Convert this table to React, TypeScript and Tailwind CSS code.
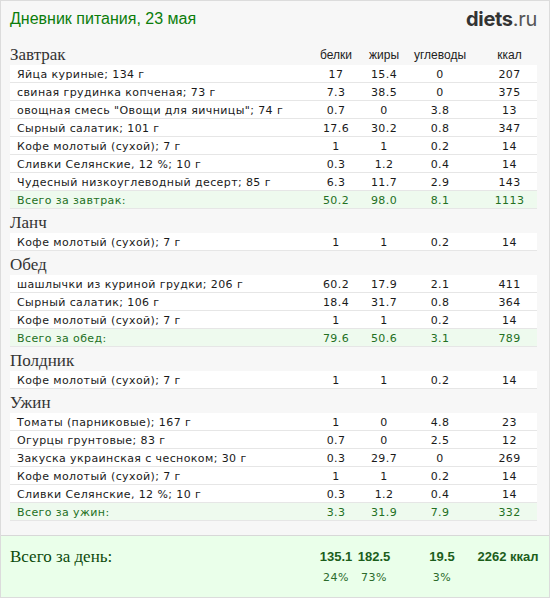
import React from 'react';

type Item = { name: string; p: string; f: string; c: string; k: string };
type Meal = { title: string; items: Item[]; total?: { label: string; p: string; f: string; c: string; k: string } };

const coffee: Item = { name: 'Кофе молотый (сухой); 7 г', p: '1', f: '1', c: '0.2', k: '14' };

const meals: Meal[] = [
  {
    title: 'Завтрак',
    items: [
      { name: 'Яйца куриные; 134 г', p: '17', f: '15.4', c: '0', k: '207' },
      { name: 'свиная грудинка копченая; 73 г', p: '7.3', f: '38.5', c: '0', k: '375' },
      { name: 'овощная смесь "Овощи для яичницы"; 74 г', p: '0.7', f: '0', c: '3.8', k: '13' },
      { name: 'Сырный салатик; 101 г', p: '17.6', f: '30.2', c: '0.8', k: '347' },
      coffee,
      { name: 'Сливки Селянские, 12 %; 10 г', p: '0.3', f: '1.2', c: '0.4', k: '14' },
      { name: 'Чудесный низкоуглеводный десерт; 85 г', p: '6.3', f: '11.7', c: '2.9', k: '143' },
    ],
    total: { label: 'Всего за завтрак:', p: '50.2', f: '98.0', c: '8.1', k: '1113' },
  },
  { title: 'Ланч', items: [coffee] },
  {
    title: 'Обед',
    items: [
      { name: 'шашлычки из куриной грудки; 206 г', p: '60.2', f: '17.9', c: '2.1', k: '411' },
      { name: 'Сырный салатик; 106 г', p: '18.4', f: '31.7', c: '0.8', k: '364' },
      coffee,
    ],
    total: { label: 'Всего за обед:', p: '79.6', f: '50.6', c: '3.1', k: '789' },
  },
  { title: 'Полдник', items: [coffee] },
  {
    title: 'Ужин',
    items: [
      { name: 'Томаты (парниковые); 167 г', p: '1', f: '0', c: '4.8', k: '23' },
      { name: 'Огурцы грунтовые; 83 г', p: '0.7', f: '0', c: '2.5', k: '12' },
      { name: 'Закуска украинская с чесноком; 30 г', p: '0.3', f: '29.7', c: '0', k: '269' },
      coffee,
      { name: 'Сливки Селянские, 12 %; 10 г', p: '0.3', f: '1.2', c: '0.4', k: '14' },
    ],
    total: { label: 'Всего за ужин:', p: '3.3', f: '31.9', c: '7.9', k: '332' },
  },
];

const grid = 'grid grid-cols-[300px_52px_44px_68px_63px]';
const rowFont = "font-['DejaVu_Sans',sans-serif] text-[11px] tracking-[0.4px]";

function Row({ item, total }: { item: Item; total?: boolean }) {
  return (
    <div
      className={`${grid} ${rowFont} h-[18px] pt-[2px] items-center border-b border-[#e6e6e6] ${
        total ? 'bg-[#eefaee] text-[#237023]' : 'bg-white text-[#1a1a1a]'
      }`}
    >
      <span className="pl-[7px] whitespace-nowrap">{item.name}</span>
      <span className="text-center">{item.p}</span>
      <span className="text-center">{item.f}</span>
      <span className="text-center">{item.c}</span>
      <span className="text-center pl-[8px]">{item.k}</span>
    </div>
  );
}

function MealBlock({ meal, first }: { meal: Meal; first: boolean }) {
  return (
    <div>
      <div className={`${grid} h-[24px] pt-[5px] leading-[18px]`}>
        <span className="font-['Liberation_Serif',serif] text-[17px] text-[#333]">{meal.title}</span>
        {first &&
          ['белки', 'жиры', 'углеводы', 'ккал'].map((h, i) => (
            <span
              key={h}
              className={`text-center font-['Liberation_Sans',sans-serif] text-[12px] text-[#222] ${i === 3 ? 'pl-[8px]' : ''}`}
            >
              {h}
            </span>
          ))}
      </div>
      {meal.items.map((it, i) => (
        <Row key={i} item={it} />
      ))}
      {meal.total && (
        <Row
          total
          item={{ name: meal.total.label, p: meal.total.p, f: meal.total.f, c: meal.total.c, k: meal.total.k }}
        />
      )}
    </div>
  );
}

export default function App() {
  return (
    <div className="w-[550px] h-[598px] bg-[#f7f7f7] border border-[#dcdcdc] flex flex-col overflow-hidden">
      <div className="flex items-center justify-between h-[34px] pl-[9px] pr-[12px] pt-[1px]">
        <span className="font-['Liberation_Sans',sans-serif] text-[16px] text-[#0b7d0b]">Дневник питания, 23 мая</span>
        <span className="font-['Inter',sans-serif] text-[20px] text-[#333] tracking-[-0.3px]">
          <span className="font-bold">diets</span>
          <span className="text-[#555]">.ru</span>
        </span>
      </div>
      <div className="pl-[9px] pr-[12px] pt-[6px]">
        {meals.map((m, i) => (
          <MealBlock key={m.title} meal={m} first={i === 0} />
        ))}
      </div>
      <div className="mt-[14px] flex-1 border-t border-[#d8d8d8] bg-[#eaffea] px-[9px] pt-[11px]">
        <div className="flex items-center h-[20px]">
          <span className="w-[301px] font-['Liberation_Serif',serif] text-[17px] text-[#0c4a0c]">Всего за день:</span>
          <div className="w-[50px] flex justify-center font-['Liberation_Sans',sans-serif] font-bold text-[13px] text-[#1c5e1c]">135.1</div>
          <div className="w-[26px] flex justify-center font-['Liberation_Sans',sans-serif] font-bold text-[13px] text-[#1c5e1c]">182.5</div>
          <div className="w-[110px] flex justify-center font-['Liberation_Sans',sans-serif] font-bold text-[13px] text-[#1c5e1c]">19.5</div>
          <div className="w-[22px] flex justify-center font-['Liberation_Sans',sans-serif] font-bold text-[13px] text-[#1c5e1c] whitespace-nowrap">2262 ккал</div>
        </div>
        <div className="flex items-center h-[22px] font-['DejaVu_Sans',sans-serif] text-[11px] tracking-[0.5px] text-[#2b6b2b]">
          <span className="w-[301px]" />
          <div className="w-[50px] flex justify-center">24%</div>
          <div className="w-[26px] flex justify-center">73%</div>
          <div className="w-[110px] flex justify-center">3%</div>
        </div>
      </div>
    </div>
  );
}
